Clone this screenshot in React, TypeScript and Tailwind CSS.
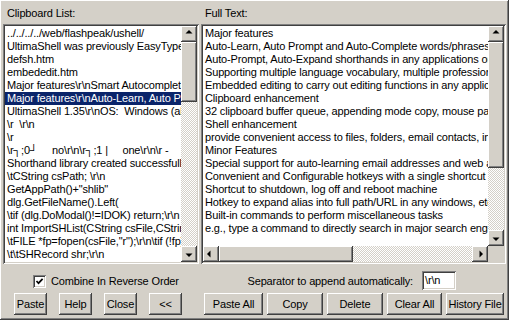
import React from "react";

const raised =
  "shadow-[inset_-1px_-1px_0_#404040,inset_1px_1px_0_#ffffff,inset_-2px_-2px_0_#808080,inset_2px_2px_0_#d4d0c8]";
const sunken =
  "shadow-[inset_1px_1px_0_#808080,inset_-1px_-1px_0_#ffffff,inset_2px_2px_0_#404040,inset_-2px_-2px_0_#d4d0c8]";
const track =
  "bg-[repeating-conic-gradient(#ffffff_0%_25%,#d4d0c8_0%_50%)] bg-[length:2px_2px]";

const listRows = [
  "../../../../web/flashpeak/ushell/",
  "UltimaShell was previously EasyType",
  "defsh.htm",
  "embededit.htm",
  "Major features\\r\\nSmart Autocomplete",
  "Major features\\r\\nAuto-Learn, Auto Prompt",
  "UltimaShell 1.35\\r\\nOS:  Windows (all)",
  "\\r  \\r\\n",
  "\\r",
  "\\r┐;0┘     no\\r\\n\\r┐;1 |     one\\r\\n\\r -",
  "Shorthand library created successfully",
  "\\tCString csPath; \\r\\n",
  'GetAppPath()+"shlib"',
  "dlg.GetFileName().Left(",
  "\\tif (dlg.DoModal()!=IDOK) return;\\r\\n",
  "int ImportSHList(CString csFile,CString",
  '\\tFILE *fp=fopen(csFile,"r");\\r\\n\\tif (!fp)',
  "\\t\\tSHRecord shr;\\r\\n",
  "\\t\\tchar buf[MAX_SH_LEN];",
];

const fullRows = [
  "Major features",
  "Auto-Learn, Auto Prompt and Auto-Complete words/phrases",
  "Auto-Prompt, Auto-Expand shorthands in any applications or",
  "Supporting multiple language vocabulary, multiple profession",
  "Embedded editing to carry out editing functions in any applications",
  "Clipboard enhancement",
  "32 clipboard buffer queue, appending mode copy, mouse paste",
  "Shell enhancement",
  "provide convenient access to files, folders, email contacts, internet",
  "Minor Features",
  "Special support for auto-learning email addresses and web addresses",
  "Convenient and Configurable hotkeys with a single shortcut",
  "Shortcut to shutdown, log off and reboot machine",
  "Hotkey to expand alias into full path/URL in any windows, etc",
  "Built-in commands to perform miscellaneous tasks",
  "e.g., type a command to directly search in major search engines",
];

function Arrow({ dir }: { dir: "up" | "down" | "left" | "right" }) {
  const pts =
    dir === "up"
      ? "4,6 11,6 7.5,2.5"
      : dir === "down"
      ? "4,6 11,6 7.5,9.5"
      : dir === "left"
      ? "6,4 6,11 2.5,7.5"
      : "6,4 6,11 9.5,7.5";
  return (
    <div className={`w-[16px] h-[16px] bg-[#d4d0c8] ${raised} flex items-center justify-center shrink-0`}>
      <svg width="16" height="16" viewBox="0 0 16 16" className="block">
        <polygon
          points={pts}
          fill="#000"
          transform={
            dir === "up" || dir === "down"
              ? "translate(0.5,1.5)"
              : "translate(1.5,0.5)"
          }
        />
      </svg>
    </div>
  );
}

function Btn({ w, children }: { w: string; children: React.ReactNode }) {
  return (
    <div
      className={`${w} h-[22px] bg-[#d4d0c8] ${raised} flex items-center justify-center text-black shrink-0`}
    >
      {children}
    </div>
  );
}

export default function App() {
  return (
    <div className="w-[509px] h-[320px] bg-[#d4d0c8] font-['Liberation_Sans',Arial,sans-serif] text-[11px] leading-[13px] tracking-[-0.15px] text-black overflow-hidden shadow-[inset_-1px_-1px_0_#404040,inset_1px_1px_0_#ffffff,inset_-2px_-2px_0_#808080]">
      <div className="flex pl-[3px] pt-[7px]">
        {/* Left column */}
        <div className="w-[196px] flex flex-col shrink-0">
          <div className="h-[17px] pl-[4px]">Clipboard List:</div>
          <div className={`h-[240px] bg-white ${sunken} p-[2px] flex`}>
            <div className="flex-1 overflow-hidden pt-[1px]">
              {listRows.map((r, i) => (
                <div
                  key={i}
                  className={`h-[13px] pl-[2px] whitespace-pre overflow-hidden ${
                    i === 5 ? "bg-[#0a246a] text-white" : ""
                  }`}
                >
                  {r}
                </div>
              ))}
            </div>
            <div className="w-[16px] flex flex-col shrink-0">
              <Arrow dir="up" />
              <div className={`h-[60px] bg-[#d4d0c8] ${raised}`} />
              <div className={`flex-1 ${track}`} />
              <Arrow dir="down" />
            </div>
          </div>
        </div>
        {/* Right column */}
        <div className="w-[305px] ml-[2px] flex flex-col shrink-0">
          <div className="h-[17px] pl-[4px]">Full Text:</div>
          <div className={`h-[240px] bg-white ${sunken} p-[2px] flex flex-col`}>
            <div className="flex flex-1 min-h-0">
              <div className="flex-1 overflow-hidden pt-[1px]">
                {fullRows.map((r, i) => (
                  <div key={i} className="h-[13px] pl-[2px] whitespace-pre overflow-hidden">
                    {r}
                  </div>
                ))}
              </div>
              <div className="w-[16px] flex flex-col shrink-0">
                <Arrow dir="up" />
                <div className={`h-[126px] bg-[#d4d0c8] ${raised}`} />
                <div className={`flex-1 ${track}`} />
                <Arrow dir="down" />
              </div>
            </div>
            <div className="h-[16px] flex shrink-0">
              <Arrow dir="left" />
              <div className={`w-[134px] bg-[#d4d0c8] ${raised}`} />
              <div className={`flex-1 ${track}`} />
              <Arrow dir="right" />
              <div className="w-[16px] bg-[#d4d0c8]" />
            </div>
          </div>
        </div>
      </div>

      {/* Options row */}
      <div className="flex h-[29px] pl-[3px]">
        <div className="w-[196px] flex items-start pt-[11px] pl-[30px] shrink-0">
          <div className={`w-[13px] h-[13px] bg-white ${sunken} flex items-center justify-center shrink-0`}>
            <svg width="13" height="13" viewBox="0 0 13 13" className="block">
              <path d="M3.5 6 L5.5 8.2 L9.6 3.8" stroke="#000" strokeWidth="1.7" fill="none" />
            </svg>
          </div>
          <span className="ml-[5px] leading-[13px]">Combine In Reverse Order</span>
        </div>
        <div className="w-[305px] ml-[2px] flex items-start justify-end pt-[7px] pr-[50px] shrink-0">
          <span className="mt-[4px]">Separator to append automatically:</span>
          <div className={`ml-[9px] w-[34px] h-[19px] bg-white ${sunken} pl-[3px] pt-[3px]`}>
            \r\n
          </div>
        </div>
      </div>

      {/* Buttons row */}
      <div className="flex pl-[3px]">
        <div className="w-[196px] flex gap-[12px] pl-[11px] shrink-0">
          <Btn w="w-[33px]">Paste</Btn>
          <Btn w="w-[33px]">Help</Btn>
          <Btn w="w-[33px]">Close</Btn>
          <Btn w="w-[33px]">&lt;&lt;</Btn>
        </div>
        <div className="w-[305px] ml-[2px] flex gap-[4px] pl-[3px] shrink-0">
          <Btn w="w-[59px]">Paste All</Btn>
          <Btn w="w-[56px]">Copy</Btn>
          <Btn w="w-[56px]">Delete</Btn>
          <Btn w="w-[55px]">Clear All</Btn>
          <Btn w="w-[58px]">History File</Btn>
        </div>
      </div>
    </div>
  );
}
